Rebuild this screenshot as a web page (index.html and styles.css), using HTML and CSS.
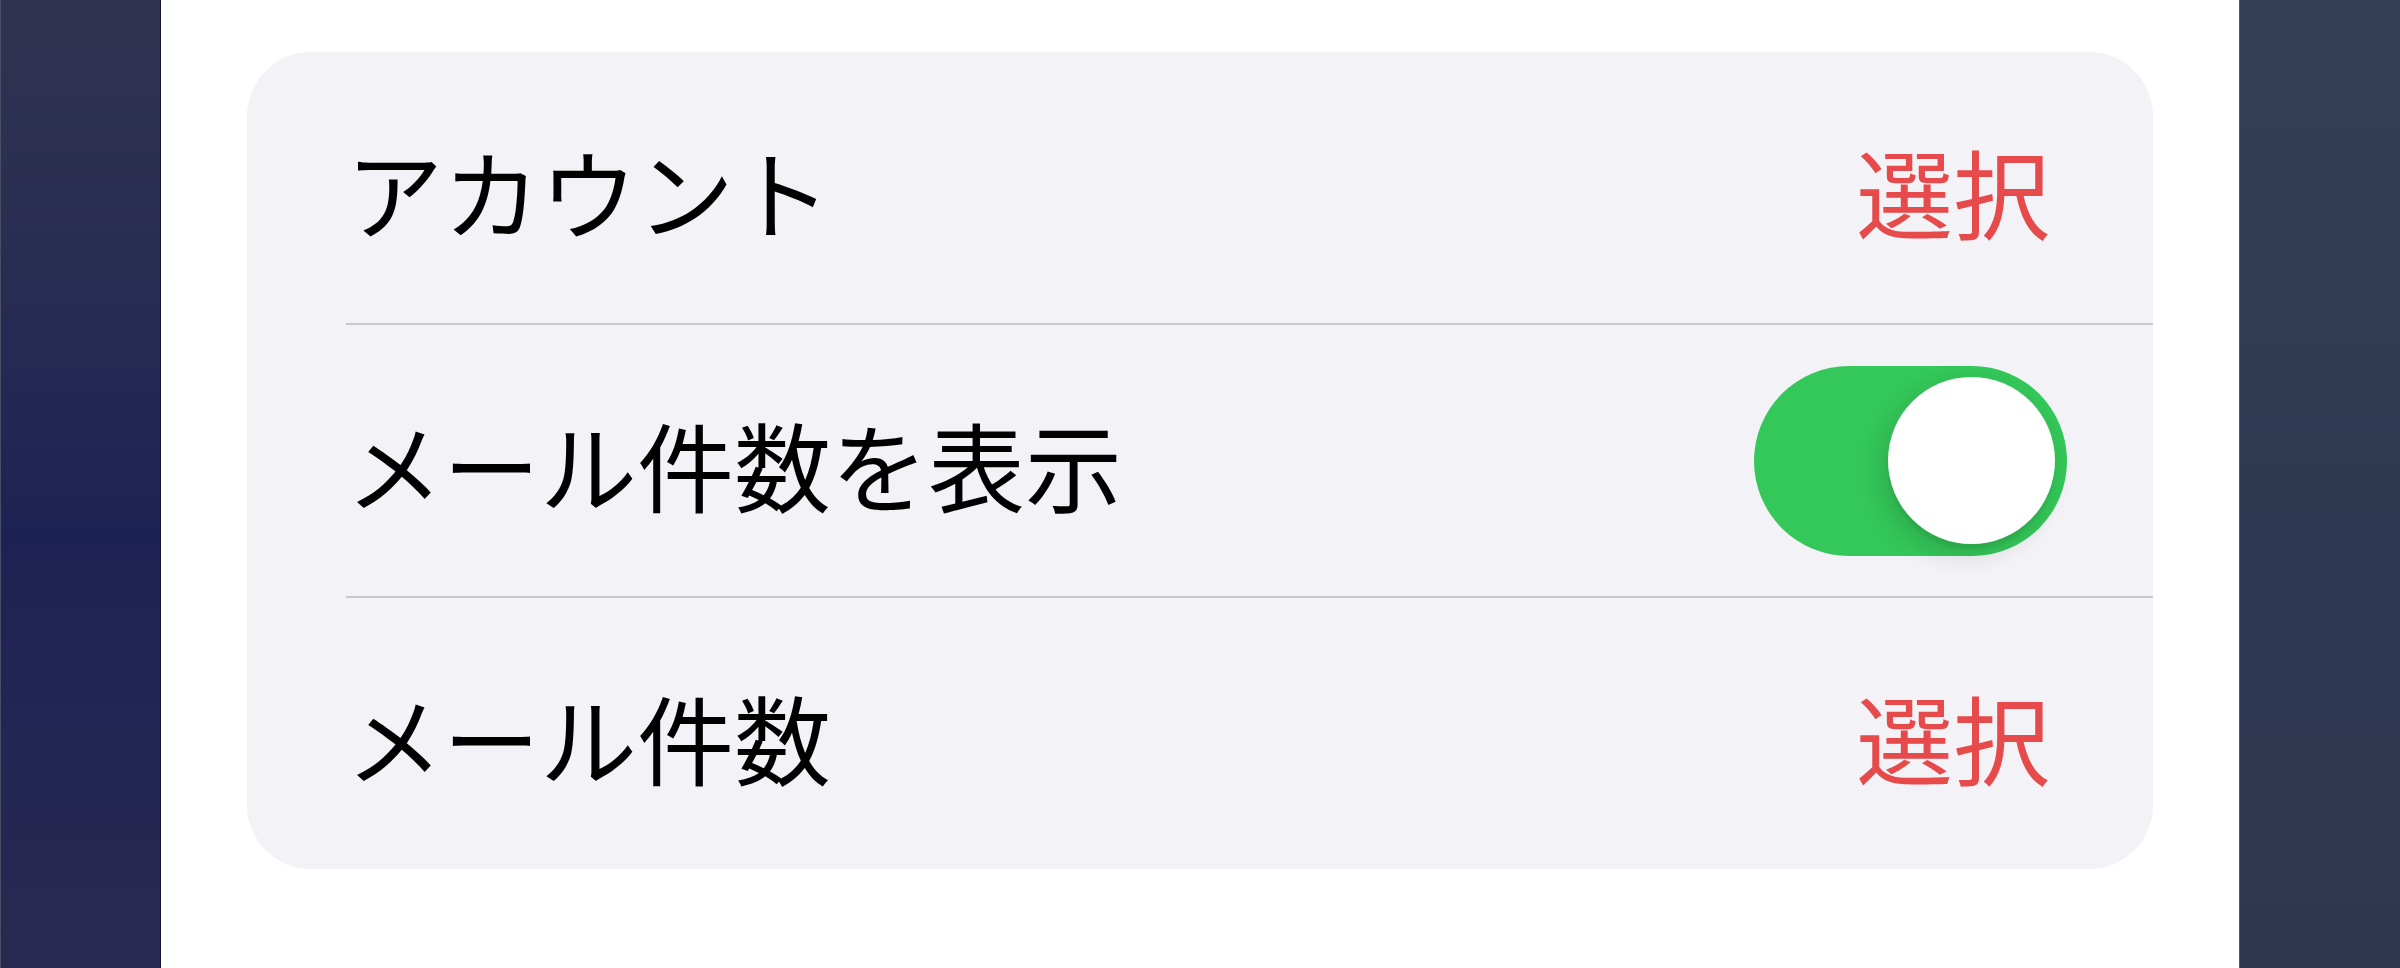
FILE: index.html
```html
<!DOCTYPE html>
<html lang="ja">
<head>
<meta charset="utf-8">
<title>設定</title>
<link rel="stylesheet" href="styles.css">
</head>
<body>
<div class="page">
  <div class="side side-left"></div>
  <main class="main">
    <section class="card">
      <div class="row">
        <span class="label">アカウント</span>
        <span class="value">選択</span>
      </div>
      <div class="row">
        <span class="label">メール件数を表示</span>
        <span class="toggle" role="switch" aria-checked="true"><span class="knob"></span></span>
      </div>
      <div class="row">
        <span class="label">メール件数</span>
        <span class="value">選択</span>
      </div>
    </section>
  </main>
  <div class="side side-right"></div>
</div>
</body>
</html>
```

FILE: styles.css
```css
html, body {
  margin: 0;
  padding: 0;
}
body {
  width: 2400px;
  height: 968px;
  overflow: hidden;
  font-family: "Noto Sans CJK JP", "Noto Sans", sans-serif;
  background: #ffffff;
}
.page {
  display: flex;
  width: 2400px;
  height: 968px;
}
.side {
  width: 160px;
  flex: none;
}
.side-left {
  background: linear-gradient(180deg, #30334f 0%, #282c52 30%, #1d2254 55%, #232553 75%, #282a50 100%);
  border-right: 1px solid #14173c;
  box-shadow: inset 1px 0 0 #4a4d66;
}
.side-right {
  background: linear-gradient(180deg, #343f56 0%, #2f3a53 40%, #2e3852 65%, #31364f 100%);
  border-left: 1px solid #4d566a;
}
.main {
  flex: 1;
  background: #ffffff;
  padding: 52px 86px 0 86px;
}
.card {
  background: #f2f2f7;
  border-radius: 64px;
  overflow: hidden;
}
.row {
  display: flex;
  align-items: center;
  justify-content: space-between;
  height: 271px;
  margin-left: 99px;
  padding-right: 103px;
}
.row + .row {
  border-top: 2px solid #c9c8ce;
}
.label {
  font-size: 97px;
  line-height: 1;
  color: #000000;
  letter-spacing: 0;
  padding-top: 4px;
}
.value {
  font-size: 97px;
  line-height: 1;
  color: #e64a4b;
  padding-top: 4px;
}
.toggle {
  display: flex;
  justify-content: flex-end;
  align-items: center;
  width: 313px;
  height: 190px;
  box-sizing: border-box;
  padding: 12px;
  border-radius: 95px;
  background: #34c759;
  margin-right: -17px;
}
.knob {
  width: 167px;
  height: 167px;
  border-radius: 50%;
  background: #ffffff;
  box-shadow: -6px 10px 26px rgba(0, 0, 0, 0.14), 0 6px 3px rgba(0, 0, 0, 0.05);
}
```
